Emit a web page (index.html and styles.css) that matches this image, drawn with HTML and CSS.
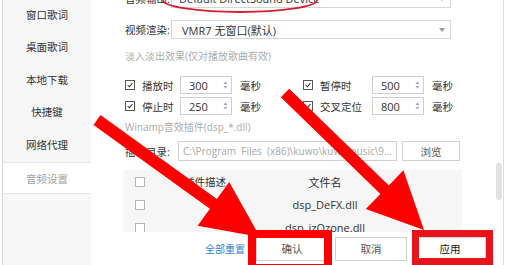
FILE: index.html
```html
<!DOCTYPE html>
<html lang="zh-CN">
<head>
    <meta charset="UTF-8">
    <meta name="viewport" content="width=device-width, initial-scale=1.0">
    <title>音频设置</title>
    <link rel="stylesheet" href="styles.css">
</head>
<body>
<div class="window">
    <aside class="sidebar">
        <div class="nav-item">窗口歌词</div>
        <div class="nav-item">桌面歌词</div>
        <div class="nav-item">本地下载</div>
        <div class="nav-item">快捷键</div>
        <div class="nav-item">网络代理</div>
        <div class="nav-item active">音频设置</div>
    </aside>

    <main class="settings">
        <div class="field-row">
            <span class="field-label">音频输出:</span>
            <div class="select audio">Default DirectSound Device<svg class="caret" width="6" height="4"><path d="M0 0 L6 0 L3 4Z" fill="#999"/></svg></div>
        </div>
        <div class="field-row video">
            <span class="field-label">视频渲染:</span>
            <div class="select">VMR7 无窗口(默认)<svg class="caret" width="6" height="4"><path d="M0 0 L6 0 L3 4Z" fill="#999"/></svg></div>
        </div>

        <div class="note fade-note">淡入淡出效果(仅对播放歌曲有效)</div>

        <div class="effects">
            <span class="check on"><svg viewBox="0 0 10 10"><path d="M2 5 L4.2 7.2 L8 2.6" stroke="#333" stroke-width="1.3" fill="none"/></svg></span>
            <span>播放时</span>
            <div class="num">300<svg width="5" height="10"><path d="M0.5 4 L2.5 1.5 L4.5 4Z M0.5 6 L2.5 8.5 L4.5 6Z" fill="#aaa"/></svg></div>
            <span class="unit">毫秒</span>
            <span class="check on"><svg viewBox="0 0 10 10"><path d="M2 5 L4.2 7.2 L8 2.6" stroke="#333" stroke-width="1.3" fill="none"/></svg></span>
            <span>暂停时</span>
            <div class="num">500<svg width="5" height="10"><path d="M0.5 4 L2.5 1.5 L4.5 4Z M0.5 6 L2.5 8.5 L4.5 6Z" fill="#aaa"/></svg></div>
            <span class="unit">毫秒</span>

            <span class="check on"><svg viewBox="0 0 10 10"><path d="M2 5 L4.2 7.2 L8 2.6" stroke="#333" stroke-width="1.3" fill="none"/></svg></span>
            <span>停止时</span>
            <div class="num">250<svg width="5" height="10"><path d="M0.5 4 L2.5 1.5 L4.5 4Z M0.5 6 L2.5 8.5 L4.5 6Z" fill="#aaa"/></svg></div>
            <span class="unit">毫秒</span>
            <span class="check on"><svg viewBox="0 0 10 10"><path d="M2 5 L4.2 7.2 L8 2.6" stroke="#333" stroke-width="1.3" fill="none"/></svg></span>
            <span>交叉定位</span>
            <div class="num">800<svg width="5" height="10"><path d="M0.5 4 L2.5 1.5 L4.5 4Z M0.5 6 L2.5 8.5 L4.5 6Z" fill="#aaa"/></svg></div>
            <span class="unit">毫秒</span>
        </div>

        <div class="note winamp-note">Winamp音效插件(dsp_*.dll)</div>

        <div class="dir-row">
            <span class="dir-label">插件目录:</span>
            <div class="path">C:\Program&nbsp; Files&nbsp; (x86)\kuwo\kuwomusic\9...</div>
            <div class="btn browse">浏览</div>
        </div>

        <div class="plugin-table">
            <div class="plugin-row">
                <span class="check"></span>
                <span class="col-desc">插件描述</span>
                <span class="col-file">文件名</span>
            </div>
            <div class="plugin-row">
                <span class="check"></span>
                <span class="col-desc"></span>
                <span class="col-file">dsp_DeFX.dll</span>
            </div>
            <div class="plugin-row">
                <span class="check"></span>
                <span class="col-desc"></span>
                <span class="col-file">dsp_izOzone.dll</span>
            </div>
        </div>

        <div class="footer">
            <a class="reset-link">全部重置</a>
            <div class="btn action">确认</div>
            <div class="btn action">取消</div>
            <div class="btn action apply">应用</div>
        </div>

        <div class="scroll-thumb"></div>
    </main>

    <!-- red markup drawn over the screenshot -->
    <svg class="annotations" width="505" height="265" viewBox="0 0 505 265">
        <ellipse cx="240" cy="0" rx="77" ry="12" fill="none" stroke="#d4202c" stroke-width="1.8"/>
        <polygon fill="#ff0000" points="93.5,124.9 100.5,115.1 216.9,198.9 229.2,181.9 260,237 197.6,225.7 209.9,208.7"/>
        <polygon fill="#ff0000" points="280.8,97.3 289.2,88.7 388.8,185.4 403.4,170.3 424,230 365.8,209.1 380.4,194"/>
        <rect x="252" y="234" width="76" height="34" fill="none" stroke="#ff0000" stroke-width="8"/>
        <rect x="415.5" y="233.5" width="74" height="28" fill="none" stroke="#e8141c" stroke-width="7"/>
    </svg>
</div>
</body>
</html>
```

FILE: styles.css
```css
body {
    margin: 0;
    font-family: "Open Sans", "Noto Sans CJK SC", sans-serif;
    font-size: 10.5px;
    color: #333;
    background-color: #fff;
}
.window {
    position: relative;
    display: flex;
    width: 505px;
    height: 265px;
    padding-left: 2px;
    box-sizing: border-box;
    overflow: hidden;
}
.sidebar {
    width: 88px;
    flex-shrink: 0;
    border-left: 1px solid #d4d4d4;
    background-color: #f7f7f7;
}
.nav-item {
    height: 32.6px;
    line-height: 32.6px;
    text-align: center;
    box-sizing: border-box;
}
.nav-item:first-child {
    margin-top: -1.3px;
}
.nav-item.active {
    background-color: #fff;
    color: #a3a3a3;
    border-top: 1px solid #e6e6e6;
    border-bottom: 1px solid #e6e6e6;
}
.settings {
    position: relative;
    flex: 1;
    margin-top: -11px;
    margin-right: 1px;
    padding-left: 34px;
    border-right: 1px solid #dedede;
}
.field-row {
    display: flex;
    align-items: center;
    height: 19px;
}
.field-row.video {
    margin-top: 12px;
}
.field-label {
    width: 46px;
}
.select {
    display: flex;
    align-items: center;
    width: 280px;
    height: 19px;
    padding: 0 5px 0 10px;
    box-sizing: border-box;
    border: 1px solid #d5d5d5;
    font-size: 11px;
}
.select.audio {
    padding-left: 7px;
}
.caret {
    margin-left: auto;
}
.note {
    line-height: 14px;
    font-size: 10px;
    color: #acacac;
}
.fade-note {
    margin-top: 10px;
}
.effects {
    display: grid;
    grid-template-columns: 17px 38px 52px 71px 17px 52px 52px auto;
    grid-auto-rows: 18px;
    row-gap: 3px;
    align-items: center;
    margin-top: 13px;
}
.check {
    display: block;
    width: 10px;
    height: 10px;
    box-sizing: border-box;
    border: 1px solid #b5b5b5;
    background-color: #fff;
}
.check.on {
    border-color: #555;
}
.check svg {
    display: block;
    width: 8px;
    height: 8px;
}
.num {
    display: flex;
    align-items: center;
    justify-content: space-between;
    height: 18px;
    padding: 0 3px 0 8px;
    box-sizing: border-box;
    border: 1px solid #cfcfcf;
    font-size: 11px;
}
.unit {
    padding-left: 8px;
}
.winamp-note {
    margin-top: 5px;
}
.dir-row {
    display: flex;
    align-items: center;
    height: 20px;
    margin-top: 7px;
}
.dir-label {
    width: 53px;
}
.path {
    width: 219px;
    height: 20px;
    line-height: 18px;
    padding-left: 4px;
    box-sizing: border-box;
    border: 1px solid #d0d0d0;
    color: #a8a8a8;
    font-size: 10px;
    white-space: nowrap;
    overflow: hidden;
}
.btn {
    display: flex;
    align-items: center;
    justify-content: center;
    box-sizing: border-box;
    border: 1px solid #d0d0d0;
    background-color: #fff;
}
.browse {
    width: 58px;
    height: 20px;
    margin-left: 5px;
    color: #555;
}
.plugin-table {
    width: 339px;
    height: 62px;
    margin: 9px 0 0 -2px;
    background-color: #f6f6f6;
    overflow: hidden;
}
.plugin-row {
    display: grid;
    grid-template-columns: 35px 94px 146px;
    align-items: center;
    height: 23px;
}
.plugin-row .check {
    margin-left: 12px;
}
.col-desc,
.col-file {
    text-align: center;
}
.col-file {
    font-size: 11px;
}
.footer {
    display: flex;
    align-items: center;
    height: 33px;
    padding-left: 80px;
    background-color: #fff;
}
.reset-link {
    margin-right: 11px;
    font-size: 10px;
    color: #3a7fd5;
    white-space: nowrap;
    cursor: pointer;
}
.action {
    width: 72px;
    height: 24px;
    margin-right: 7px;
    flex-shrink: 0;
    color: #555;
}
.action.apply {
    color: #111;
}
.scroll-thumb {
    position: absolute;
    top: 174px;
    right: 1px;
    width: 6px;
    height: 37px;
    border-radius: 3px;
    background-color: #e2e2e2;
}
.annotations {
    position: absolute;
    top: 0;
    left: 0;
    pointer-events: none;
}
```
